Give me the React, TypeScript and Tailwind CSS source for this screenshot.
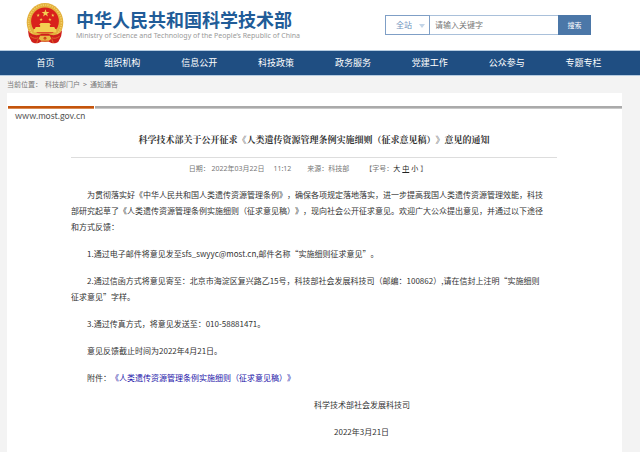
import { useState } from "react";

const NAV_ITEMS = [
  "首页",
  "组织机构",
  "信息公开",
  "科技政策",
  "政务服务",
  "党建工作",
  "公众参与",
  "专题专栏",
];

const FONT_SIZES = ["大", "中", "小"];

export default function App() {
  return (
    <div
      lang="zh-CN"
      className="min-h-screen bg-[#f3f3f3] font-['Noto_Sans_CJK_SC',sans-serif] [text-spacing-trim:space-all]"
    >
      <Header />
      <NavBar />
      <main className="ml-[7px] mr-[18px]">
        <nav
          aria-label="当前位置"
          className="flex h-[17px] items-center text-[7px] text-[#777]"
        >
          <span>当前位置：</span>
          <a href="#" className="ml-[3px]">
            科技部门户
          </a>
          <span className="mx-[3px]">&gt;</span>
          <a href="#">通知通告</a>
        </nav>
        <Article />
      </main>
    </div>
  );
}

const Header = () => {
  const [keyword, setKeyword] = useState("");

  return (
    <header className="flex h-[50px] bg-white pl-[26px] pr-[49px]">
      <Emblem />
      <div className="ml-[12px] flex-1 pt-[9px] whitespace-nowrap">
        <h1 className="text-[18px] leading-[20px] font-bold text-[#215c98]">
          中华人民共和国科学技术部
        </h1>
        <p className="mt-[2px] font-['Noto_Sans',sans-serif] text-[7px] leading-[10px] text-[#999]">
          Ministry of Science and Technology of the People’s Republic of China
        </p>
      </div>
      <form
        className="mt-[15px] flex h-[20px] text-[8px]"
        onSubmit={(e) => e.preventDefault()}
      >
        <div className="relative w-[45px] border border-[#7f9fc6]">
          <select
            aria-label="搜索范围"
            className="h-full w-full appearance-none pl-[10px] text-[#6f93bd] outline-none"
          >
            <option>全站</option>
          </select>
          <svg
            viewBox="0 0 6 4"
            className="pointer-events-none absolute top-[8px] right-[4px] h-[4px] w-[6px]"
          >
            <path d="M0 0h6L3 4z" fill="#c3d5e8" />
          </svg>
        </div>
        <input
          type="text"
          aria-label="关键字"
          placeholder="请输入关键字"
          value={keyword}
          onChange={(e) => setKeyword(e.target.value)}
          className="w-[128px] border-y border-[#a9c0da] pl-[5px] outline-none placeholder:text-[#777]"
        />
        <button
          type="submit"
          className="w-[33px] bg-[#4b77a8] text-[7px] text-white"
        >
          搜索
        </button>
      </form>
    </header>
  );
};

const NavBar = () => (
  <nav className="border-y border-[#b5cbe0] bg-[#1f4e82]">
    <ul className="mr-[18px] ml-[7px] grid h-[24px] grid-cols-8">
      {NAV_ITEMS.map((item) => (
        <li key={item} className="flex items-center justify-center">
          <a href="#" className="text-[9px] text-white">
            {item}
          </a>
        </li>
      ))}
    </ul>
  </nav>
);

const Article = () => {
  const [size, setSize] = useState("中");

  return (
    <div className="bg-white pt-[13px] pb-[13px]">
      <div className="flex h-[3px] gap-px pl-px">
        <div className="w-[86px] border-b border-[#d98a55] bg-[#c4540c]" />
        <div className="flex-1 border-b border-[#c9c9c9] bg-[#aaa]" />
      </div>
      <p className="pl-[8px] font-['Lato',sans-serif] text-[9px] leading-[14px] text-[#555]">
        www.most.gov.cn
      </p>

      <article className="pr-[65px] pl-[64px]">
        <h2 className="pt-[9px] pb-[10px] text-center font-['Noto_Serif_CJK_SC','Noto_Sans_CJK_SC',serif] text-[9px] leading-[15px] font-bold text-[#333]">
          科学技术部关于公开征求《人类遗传资源管理条例实施细则（征求意见稿）》意见的通知
        </h2>
        <div className="flex h-[24px] items-center justify-center gap-[16px] border-t border-[#ddd] pr-[12px] font-['Noto_Sans','Noto_Sans_CJK_SC',sans-serif] text-[7px] text-[#777]">
          <span>
            日期： <time className="mr-[7px]">2022年03月22日</time> 11:12
          </span>
          <span>来源：科技部</span>
          <span className="flex">
            【字号：
            {FONT_SIZES.map((s) => (
              <button
                key={s}
                type="button"
                aria-pressed={s === size}
                onClick={() => setSize(s)}
                className={`mr-[2px] text-[#222] ${s === size ? "underline" : ""}`}
              >
                {s}
              </button>
            ))}
            】
          </span>
        </div>

        <div className="space-y-[11px] pt-[6px] text-[8px] leading-[16px] text-[#333] [&>p]:pr-[12px] [&>p]:indent-[16px]">
          <p>
            为贯彻落实好《中华人民共和国人类遗传资源管理条例》，确保各项规定落地落实，进一步提高我国人类遗传资源管理效能，科技部研究起草了《人类遗传资源管理条例实施细则（征求意见稿）》，现向社会公开征求意见。欢迎广大公众提出意见，并通过以下途径和方式反馈：
          </p>
          <p>
            1.通过电子邮件将意见发至sfs_swyyc@most.cn,邮件名称“实施细则征求意见”。
          </p>
          <p>
            2.通过信函方式将意见寄至：北京市海淀区复兴路乙15号，科技部社会发展科技司（邮编：100862）,请在信封上注明“实施细则征求意见”字样。
          </p>
          <p>3.通过传真方式，将意见发送至：010-58881471。</p>
          <p>意见反馈截止时间为2022年4月21日。</p>
          <p>
            附件：
            <a href="#" className="text-[#1a12a8]">
              《人类遗传资源管理条例实施细则（征求意见稿）》
            </a>
          </p>
          <div className="ml-auto w-[243px] space-y-[11px]">
            <p>科学技术部社会发展科技司</p>
            <p className="pl-[20px]">2022年3月21日</p>
          </div>
        </div>
      </article>
    </div>
  );
};

const STAR = "M0-10 2.4-3.1 9.5-3.1 3.8 1.2 5.9 8.1 0 3.9-5.9 8.1-3.8 1.2-9.5-3.1-2.4-3.1z";

const Emblem = () => (
  <svg viewBox="0 0 38 44" className="mt-[3px] h-[43px] w-[38px]">
    <ellipse cx="19" cy="20" rx="18.7" ry="20" fill="#e3b03c" />
    <ellipse
      cx="19"
      cy="20"
      rx="16.8"
      ry="18"
      fill="none"
      stroke="#f3cf68"
      strokeWidth="1.6"
      strokeDasharray="1.2 1.2"
    />
    <circle cx="19" cy="18.8" r="14.2" fill="#d9201c" />
    <g fill="#f3cf52">
      <path d={STAR} transform="translate(19.5 10.5) scale(.42)" />
      <path d={STAR} transform="translate(12 12.5) scale(.18)" />
      <path d={STAR} transform="translate(27 12.5) scale(.18)" />
      <path d={STAR} transform="translate(15 17) scale(.18)" />
      <path d={STAR} transform="translate(24 17) scale(.18)" />
      <path d="M14.5 20.5h9l1.5 2h-12zM14 22.5h10v2H14zM9.5 24.5h19l1 2h-21zM7.5 26.5h23v3.5h-23z" />
    </g>
    <path d="M9 31h20l-3 4H12z" fill="#e3b03c" />
    <path
      d="M1.5 28c3 5 8 5.5 12 4.5l2-1h7l2 1c4 1 9 .5 12-4.5l-1 6-3 6c-2 1.5-5 1.5-7 1l-3-1.5h-7l-3 1.5c-2 .5-5 .5-7-1l-3-6z"
      fill="#cf1f1b"
    />
    <path d="M14 33.5h10l1.5 3-2.5 2h-8l-2.5-2z" fill="#e8b844" />
    <circle cx="19" cy="36" r="1.5" fill="#cf4a1b" />
    <path
      d="M4 34c3 2.5 6 2.5 8 1.5M34 34c-3 2.5-6 2.5-8 1.5M12 37l-1.5 4M26 37l1.5 4"
      fill="none"
      stroke="#e58a35"
      strokeWidth=".7"
    />
  </svg>
);
